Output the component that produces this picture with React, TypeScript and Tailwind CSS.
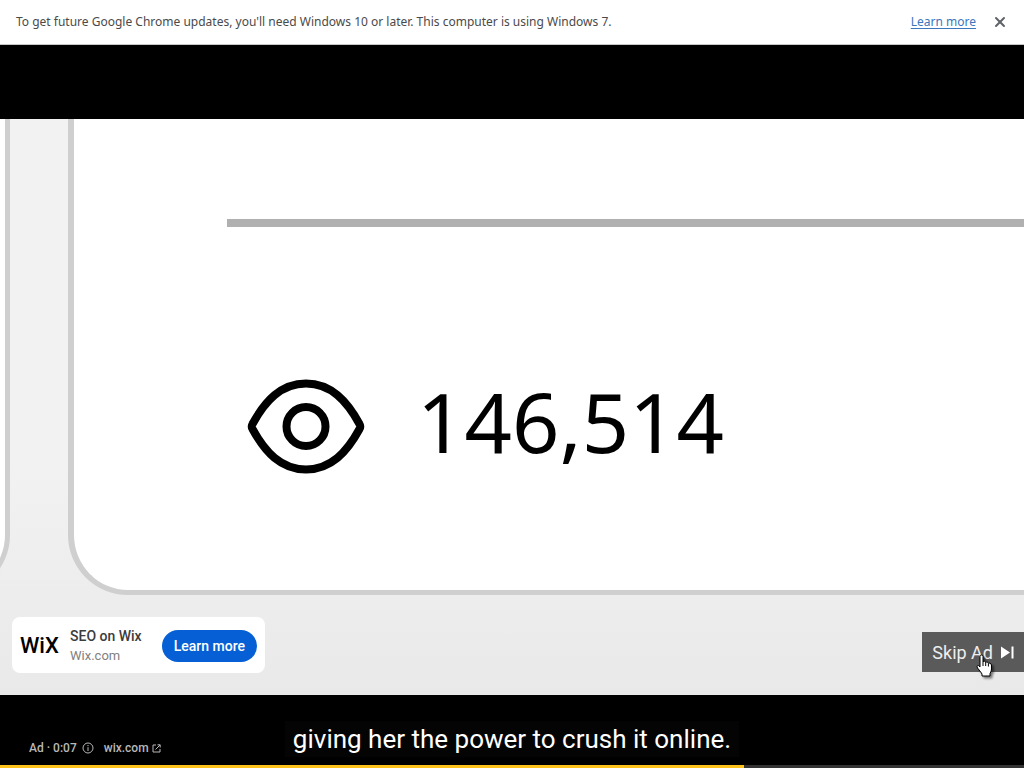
import { useState } from 'react'
import { X } from 'lucide-react'

const PLAYED = 72.66

function InfoBar({ onClose }: { onClose: () => void }) {
  return (
    <div className="flex h-[45px] shrink-0 items-center justify-between border-b border-[#c8c8c8] bg-white px-4 font-['Noto_Sans',sans-serif] text-[12px] text-[#4a4a4a]">
      <p>To get future Google Chrome updates, you'll need Windows 10 or later. This computer is using Windows 7.</p>
      <div className="flex items-center gap-4">
        <a href="#" className="text-[#3a77bd] underline underline-offset-2">
          Learn more
        </a>
        <button onClick={onClose} aria-label="Close" className="text-[#5f6368]">
          <X className="h-4 w-4" strokeWidth={3} />
        </button>
      </div>
    </div>
  )
}

function EyeIcon() {
  return (
    <svg viewBox="0 0 118 95" className="h-[95px] w-[118px]" fill="none" stroke="black" strokeWidth="8" strokeLinejoin="round">
      <path d="M5.500 45C18 22 34 4.500 59 4.500S100 22 112.500 45Q114 47.500 112.500 50C100 73 84 90.500 59 90.500S18 73 5.500 50Q4 47.500 5.500 45Z" />
      <circle cx="59" cy="47.500" r="19.500" />
    </svg>
  )
}

function HandCursor() {
  return (
    <svg
      viewBox="0 0 17 23"
      className="pointer-events-none absolute left-[54px] top-[22px] h-[23px] w-[17px] drop-shadow-[2px_2px_1px_rgba(0,0,0,0.5)]"
    >
      <path
        d="M4 2.500Q4 1 5.500 1T7 2.500V8Q7.500 7 8.500 7.200T9.700 8.700Q10.200 7.800 11.200 8T12.400 9.600Q13 8.800 14 9.200T15.500 11V15Q15.500 17 14 19.500V22H6V20Q5 18 1.500 14Q.5 12.500 1.500 11.700T4 13Z"
        fill="white"
        stroke="black"
        strokeLinejoin="round"
      />
      <path d="M7 8v4M9.700 9v3M12.400 10v2.500" stroke="black" fill="none" />
    </svg>
  )
}

function AdCard() {
  return (
    <div className="absolute bottom-[22px] left-3 flex h-14 items-center rounded-lg bg-white px-2 pt-[2px]">
      <span className="w-[50px] text-[22px] font-medium leading-6 text-black">WiX</span>
      <div className="mr-5">
        <p className="text-[14px] font-medium leading-5 text-[#3c3c3c]">SEO on Wix</p>
        <p className="text-[13px] leading-5 text-[#808080]">Wix.com</p>
      </div>
      <button className="h-8 rounded-full bg-[#065fd4] px-3 text-[14px] font-medium text-white">Learn more</button>
    </div>
  )
}

function SkipButton() {
  return (
    <button className="absolute bottom-[23px] right-0 flex h-10 items-center gap-2 bg-[#5a5a5a] px-[10px] text-[18px] text-[#eeeeee]">
      Skip Ad
      <svg viewBox="0 0 13 13" className="h-[13px] w-[13px]" fill="white">
        <path d="M0 .5L9 6.500L0 12.500ZM10.500 .5H12.500V12.500H10.500Z" />
      </svg>
      <HandCursor />
    </button>
  )
}

function VideoFrame() {
  return (
    <div className="relative flex aspect-video w-full shrink-0 overflow-hidden bg-linear-to-b from-[#f2f2f2] from-60% to-[#e9e9e9] pb-[100px]">
      <div className="flex w-[10px] shrink-0 justify-end overflow-hidden">
        <div className="w-[120px] shrink-0 rounded-br-[60px] border-b-[5px] border-r-[5px] border-[#cfcfcf] bg-white" />
      </div>
      <div className="ml-[58px] flex-1 rounded-bl-[60px] border-b-[5px] border-l-[6px] border-[#cfcfcf] bg-white pl-[153px] pt-[100px]">
        <div className="h-2 bg-[#b0b0b0]" />
        <div className="mt-[152px] flex items-start gap-[52px] pl-5">
          <EyeIcon />
          <span className="font-['Noto_Sans',sans-serif] text-[83px] leading-[84px] text-black">146,514</span>
        </div>
      </div>
      <AdCard />
      <SkipButton />
    </div>
  )
}

function BottomOverlay() {
  return (
    <div className="grid flex-1 grid-cols-[1fr_auto_1fr] items-end pb-2">
      <div className="flex items-center gap-[10px] pl-[29px] text-[12px] font-medium leading-[18px] text-[#b8b8b8]">
        <button className="flex items-center gap-[5px]">
          Ad · 0:07
          <svg viewBox="0 0 12 12" className="h-3 w-3" fill="none" stroke="currentColor">
            <circle cx="6" cy="6" r="5" />
            <path d="M6 5.200V9M6 3V4.200" />
          </svg>
        </button>
        <a href="#" className="flex items-center gap-[3px]">
          wix.com
          <svg viewBox="0 0 9 9" className="h-[9px] w-[9px]" fill="none" stroke="currentColor">
            <path d="M4 1H1V8H8V5M5.500 .8H8.200V3.500M8 1L3.500 5.500" />
          </svg>
        </a>
      </div>
      <p className="bg-[#040404] px-2 text-[26px] leading-9 text-white">giving her the power to crush it online.</p>
    </div>
  )
}

export default function App() {
  const [showInfo, setShowInfo] = useState(true)

  return (
    <div className="flex h-screen flex-col overflow-hidden bg-black font-['Roboto',sans-serif]">
      {showInfo && <InfoBar onClose={() => setShowInfo(false)} />}

      {/* Player */}
      <main className="flex flex-1 flex-col pt-[74px]">
        <VideoFrame />
        <BottomOverlay />
        <div className="h-[3px] shrink-0 bg-[#333333]">
          <div className="h-full bg-[#fcc21b]" style={{ width: `${PLAYED}%` }} />
        </div>
      </main>
    </div>
  )
}
